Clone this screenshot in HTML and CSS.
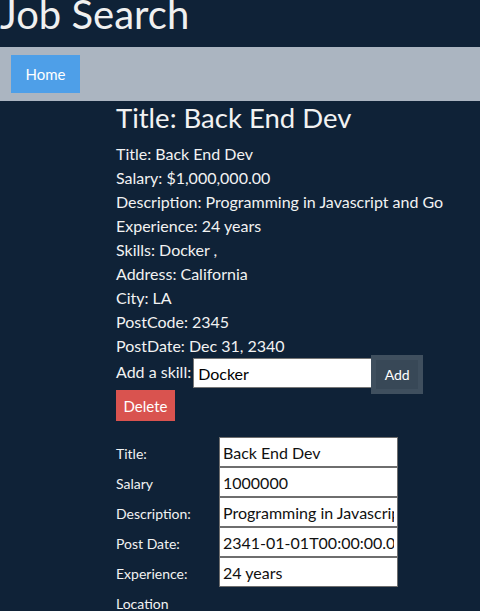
FILE: index.html
```html
<!DOCTYPE html>
<html lang="en">
<head>
<meta charset="utf-8">
<title>Job Search</title>
<link rel="stylesheet" href="styles.css">
</head>
<body>
<header class="header">
  <h1 class="brand">Job Search</h1>
</header>
<nav class="nav">
  <a class="nav-btn" href="#">Home</a>
</nav>
<main class="main">
  <h2 class="job-title">Title: Back End Dev</h2>
  <div class="details">
    <div class="line">Title: Back End Dev</div>
    <div class="line">Salary: $1,000,000.00</div>
    <div class="line">Description: Programming in Javascript and Go</div>
    <div class="line">Experience: 24 years</div>
    <div class="line">Skills: Docker ,</div>
    <div class="line">Address: California</div>
    <div class="line">City: LA</div>
    <div class="line">PostCode: 2345</div>
    <div class="line">PostDate: Dec 31, 2340</div>
  </div>
  <div class="skill-row">
    <span class="skill-label">Add a skill:</span>
    <input class="skill-input" type="text" value="Docker">
    <button class="add-btn">Add</button>
  </div>
  <button class="delete-btn">Delete</button>
  <form class="edit-form">
    <label class="f-label">Title:</label>
    <input class="f-input" type="text" value="Back End Dev">
    <label class="f-label">Salary</label>
    <input class="f-input" type="text" value="1000000">
    <label class="f-label">Description:</label>
    <input class="f-input" type="text" value="Programming in Javascript and Go">
    <label class="f-label">Post Date:</label>
    <input class="f-input" type="text" value="2341-01-01T00:00:00.000Z">
    <label class="f-label">Experience:</label>
    <input class="f-input" type="text" value="24 years">
    <label class="f-label">Location</label>
  </form>
</main>
</body>
</html>
```
FILE: styles.css
```css
html, body {
  margin: 0;
  padding: 0;
}
body {
  background: #0f2237;
  color: #f2f2f2;
  font-family: Lato, "Open Sans", sans-serif;
  overflow: hidden;
  height: 611px;
}
.header {
  height: 47px;
}
.brand {
  margin: 0;
  font-size: 40px;
  font-weight: 400;
  line-height: 29px;
  color: #f0f0f0;
  white-space: nowrap;
}
.nav {
  height: 54px;
  box-sizing: border-box;
  background: #abb5c1;
  padding: 8px 11px;
}
.nav-btn {
  display: inline-flex;
  align-items: center;
  justify-content: center;
  width: 69px;
  height: 38px;
  background: #4e9fe8;
  color: #ffffff;
  font-size: 15px;
  text-decoration: none;
}
.main {
  padding-left: 116px;
}
.job-title {
  margin: 0 0 8px;
  font-size: 27.5px;
  font-weight: 400;
  line-height: 33px;
  color: #f2f2f2;
}
.details {
  font-size: 16px;
  line-height: 24px;
}
.line {
  white-space: nowrap;
}
.skill-row {
  display: flex;
  align-items: flex-start;
  height: 34px;
  margin-top: -2px;
}
.skill-label {
  font-size: 16px;
  line-height: 24px;
  margin-top: 4px;
  margin-right: 2px;
  white-space: nowrap;
}
.skill-input {
  box-sizing: border-box;
  width: 179px;
  height: 30px;
  margin: 2px 0 0;
  padding: 0 4px;
  border: 1px solid #767676;
  background: #fff;
  color: #000;
  font-family: Lato, sans-serif;
  font-size: 16px;
}
.add-btn {
  box-sizing: border-box;
  width: 52px;
  height: 39px;
  margin-top: -1px;
  margin-left: -1px;
  flex-shrink: 0;
  border: 5px solid #3f4f5e;
  background: #384857;
  color: #fff;
  font-family: Lato, sans-serif;
  font-size: 14px;
  padding: 0;
}
.delete-btn {
  display: block;
  box-sizing: border-box;
  width: 59px;
  height: 31px;
  border: none;
  background: #d9534f;
  color: #fff;
  font-family: Lato, sans-serif;
  font-size: 15px;
  padding: 0;
}
.edit-form {
  display: grid;
  grid-template-columns: 103px 179px;
  grid-auto-rows: 30px;
  margin-top: 16px;
}
.f-label {
  display: flex;
  align-items: center;
  padding-top: 2px;
  font-size: 14px;
  color: #f2f2f2;
  white-space: nowrap;
}
.f-input {
  box-sizing: border-box;
  width: 179px;
  height: 30px;
  margin: 0;
  padding: 0 3px;
  border: 1px solid #6e6e6e;
  background: #fff;
  color: #111;
  font-family: Lato, sans-serif;
  font-size: 16px;
}
```
